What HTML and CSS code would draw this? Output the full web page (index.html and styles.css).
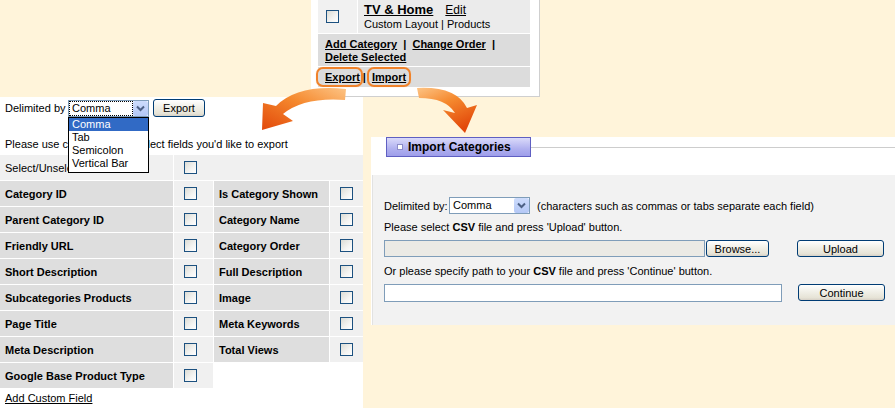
FILE: index.html
```html
<!DOCTYPE html>
<html lang="en">
<head>
  <meta charset="UTF-8" />
  <title>Categories - Export / Import</title>
  <link rel="stylesheet" href="styles.css">
</head>
<body>
  <!-- category list (top) -->
  <div class="cat-panel">
    <div class="cat-row">
      <div class="cat-check"><span class="cb"></span></div>
      <div class="cat-info">
        <div><a class="cat-name">TV &amp; Home</a><a class="cat-edit">Edit</a></div>
        <div class="cat-sub">Custom Layout | Products</div>
      </div>
    </div>
    <div class="cat-actions">
      <a>Add Category</a>&nbsp;&nbsp;|&nbsp;&nbsp;<a>Change Order</a>&nbsp;&nbsp;|<br><a>Delete Selected</a>
    </div>
    <div class="cat-io">
      <a class="hl hl-export">Export</a><span class="sep">|</span><a class="hl">Import</a>
    </div>
  </div>

  <!-- export form (left) -->
  <div class="export-panel">
    <div class="export-bar">
      <span class="bar-label">Delimited by</span>
      <div class="xp-select focus">
        <span class="val">Comma</span>
        <span class="xp-arrow"><svg width="15" height="15" viewBox="0 0 15 15"><polyline points="4,5.5 7.5,9 11,5.5" fill="none" stroke="#4d6185" stroke-width="2"/></svg></span>
      </div>
      <button class="xp-btn export-btn">Export</button>
    </div>
    <ul class="dropdown">
      <li class="sel">Comma</li>
      <li>Tab</li>
      <li>Semicolon</li>
      <li>Vertical Bar</li>
    </ul>
    <p class="hint">Please use checkboxes to select fields you'd like to export</p>
    <div class="fields">
      <div class="lbl light">Select/Unselect All</div>
      <div class="chk wide"><span class="cb"></span></div>

      <div class="lbl">Category ID</div><div class="chk"><span class="cb"></span></div>
      <div class="lbl">Is Category Shown</div><div class="chk"><span class="cb"></span></div>

      <div class="lbl">Parent Category ID</div><div class="chk"><span class="cb"></span></div>
      <div class="lbl">Category Name</div><div class="chk"><span class="cb"></span></div>

      <div class="lbl">Friendly URL</div><div class="chk"><span class="cb"></span></div>
      <div class="lbl">Category Order</div><div class="chk"><span class="cb"></span></div>

      <div class="lbl">Short Description</div><div class="chk"><span class="cb"></span></div>
      <div class="lbl">Full Description</div><div class="chk"><span class="cb"></span></div>

      <div class="lbl">Subcategories Products</div><div class="chk"><span class="cb"></span></div>
      <div class="lbl">Image</div><div class="chk"><span class="cb"></span></div>

      <div class="lbl">Page Title</div><div class="chk"><span class="cb"></span></div>
      <div class="lbl">Meta Keywords</div><div class="chk"><span class="cb"></span></div>

      <div class="lbl">Meta Description</div><div class="chk"><span class="cb"></span></div>
      <div class="lbl">Total Views</div><div class="chk"><span class="cb"></span></div>

      <div class="lbl">Google Base Product Type</div><div class="chk"><span class="cb"></span></div>
    </div>
    <a class="add-field">Add Custom Field</a>
  </div>

  <!-- import form (right) -->
  <div class="import-panel">
    <div class="import-head">
      <div class="import-tab"><span class="tab-icon"></span>Import Categories</div>
      <div class="head-line"></div>
    </div>
    <div class="import-body">
      <div class="imp-row">
        <span class="imp-label">Delimited by:</span>
        <div class="xp-select">
          <span class="val">Comma</span>
          <span class="xp-arrow"><svg width="15" height="15" viewBox="0 0 15 15"><polyline points="4,5.5 7.5,9 11,5.5" fill="none" stroke="#4d6185" stroke-width="2"/></svg></span>
        </div>
        <span class="imp-note">(characters such as commas or tabs separate each field)</span>
      </div>
      <p class="imp-text">Please select <b>CSV</b> file and press 'Upload' button.</p>
      <div class="imp-row">
        <span class="file-box"></span>
        <button class="xp-btn browse-btn">Browse...</button>
        <button class="xp-btn wide-btn">Upload</button>
      </div>
      <p class="imp-text">Or please specify path to your <b>CSV</b> file and press 'Continue' button.</p>
      <div class="imp-row">
        <input class="path-input" type="text">
        <button class="xp-btn wide-btn">Continue</button>
      </div>
    </div>
  </div>

  <!-- callout arrows -->
  <svg class="arrows" width="895" height="408" viewBox="0 0 895 408">
    <defs>
      <linearGradient id="gl" x1="1" y1="0" x2="0" y2="1">
        <stop offset="0" stop-color="#fdc485"/>
        <stop offset="0.45" stop-color="#f5892e"/>
        <stop offset="1" stop-color="#e2480a"/>
      </linearGradient>
      <linearGradient id="gr" x1="0" y1="0" x2="0.6" y2="1">
        <stop offset="0" stop-color="#fdc485"/>
        <stop offset="0.45" stop-color="#f5892e"/>
        <stop offset="1" stop-color="#e2480a"/>
      </linearGradient>
    </defs>
    <path d="M346 89 Q298 84 276 106 L263 103 L262 130 L293 121 L283 114 Q304 97 345 100 Z" fill="url(#gl)"/>
    <path d="M417 88 Q456 86 467 108 L477 105 L465 133 L443 110 L455 113 Q446 98 419 98 Z" fill="url(#gr)"/>
  </svg>
</body>
</html>
```

FILE: styles.css
```css
body {
  margin: 0;
  width: 895px;
  height: 408px;
  position: relative;
  overflow: hidden;
  background-color: #fff4da;
  font-family: 'Liberation Sans', Tahoma, sans-serif;
  font-size: 11px;
  color: #000;
}

a {
  color: #000;
  text-decoration: underline;
  cursor: pointer;
}

p {
  margin: 0;
}

/* checkbox, XP style */
.cb {
  display: inline-block;
  width: 13px;
  height: 13px;
  box-sizing: border-box;
  border: 1px solid #1c5180;
  background: linear-gradient(135deg, #dcdcd5 0%, #f4f4f2 60%, #fff 100%);
}

/* XP button */
.xp-btn {
  height: 18px;
  box-sizing: border-box;
  padding: 0;
  border: 1px solid #003c74;
  border-radius: 3px;
  background: linear-gradient(#fff 0%, #f2f1ea 40%, #e6e3d6 85%, #d6d0c5 100%);
  font-family: inherit;
  font-size: 11px;
  color: #000;
}

/* XP select */
.xp-select {
  display: flex;
  width: 81px;
  height: 17px;
  box-sizing: border-box;
  border: 1px solid #7f9db9;
  background: #fff;
}

.xp-select .val {
  flex: 1;
  padding-left: 3px;
  line-height: 15px;
}

.xp-select.focus .val {
  outline: 1px dotted #000;
  outline-offset: -1px;
}

.xp-arrow {
  width: 15px;
  height: 15px;
  border-radius: 2px;
  background: linear-gradient(#cddcfc, #b4c8f6);
}

.xp-arrow svg {
  display: block;
}

/* ---- category list ---- */
.cat-panel {
  position: absolute;
  left: 311px;
  top: 0;
  width: 212px;
  padding: 0 9px 9px 7px;
  background: #fff;
  border-right: 1px solid #cfcfcf;
  border-bottom: 1px solid #cfcfcf;
}

.cat-row {
  display: flex;
  gap: 1px;
  height: 33px;
}

.cat-check {
  width: 31px;
  padding-left: 8px;
  display: flex;
  align-items: center;
  background: #f1f1f1;
}

.cat-info {
  flex: 1;
  padding: 2px 0 0 6px;
  background: #ebebeb;
}

.cat-name {
  font-size: 13px;
  font-weight: bold;
  line-height: 15px;
}

.cat-edit {
  margin-left: 12px;
  font-size: 12px;
}

.cat-sub {
  margin-top: 1px;
  line-height: 13px;
}

.cat-actions {
  margin-top: 1px;
  height: 28px;
  padding: 4px 7px 0;
  background: #dcdcdc;
  font-weight: bold;
  line-height: 13px;
}

.cat-io {
  display: flex;
  align-items: center;
  margin-top: 1px;
  height: 20px;
  background: #dcdcdc;
  font-weight: bold;
}

.hl {
  display: inline-block;
  height: 16px;
  line-height: 16px;
  padding: 0 3px;
  border: 2px solid #f0822a;
  border-radius: 7px;
  box-shadow: 0 0 1px #f9c18f;
}

.hl-export {
  margin-left: -2px;
  padding: 0 1px 0 7px;
}

.sep {
  margin: 0 1px 0 0;
}

/* ---- export form ---- */
.export-panel {
  position: absolute;
  left: 0;
  top: 97px;
  width: 363px;
  height: 311px;
  background: #fff;
}

.export-bar {
  display: flex;
  align-items: center;
  height: 18px;
  padding: 2px 0 0 5px;
}

.bar-label {
  width: 63px;
}

.export-btn {
  width: 52px;
  margin-left: 4px;
}

.dropdown {
  position: absolute;
  left: 68px;
  top: 20px;
  width: 81px;
  box-sizing: border-box;
  margin: 0;
  padding: 0 0 2px;
  list-style: none;
  border: 1px solid #000;
  background: #fff;
}

.dropdown li {
  padding-left: 3px;
  line-height: 13px;
}

.dropdown li.sel {
  background: #316ac5;
  color: #fff;
}

.hint {
  margin: 21px 0 4px 5px;
  line-height: 13px;
}

.fields {
  display: grid;
  grid-template-columns: 173px 39px 115px 33px;
  grid-auto-rows: 25px;
  gap: 1px;
}

.lbl {
  display: flex;
  align-items: center;
  padding-left: 5px;
  background: #dedede;
  font-weight: bold;
  white-space: nowrap;
}

.lbl.light {
  background: #f0f0f0;
  font-weight: normal;
}

.chk {
  display: flex;
  align-items: center;
  padding-left: 10px;
  background: #f0f0f0;
}

.chk.wide {
  grid-column: 2 / -1;
}

.add-field {
  display: block;
  margin: 4px 0 0 5px;
  line-height: 13px;
}

/* ---- import form ---- */
.import-panel {
  position: absolute;
  left: 371px;
  top: 137px;
  width: 523px;
  padding-left: 1px;
  background: #fff;
}

.import-head {
  display: flex;
  height: 38px;
  padding-left: 14px;
}

.import-tab {
  display: flex;
  align-items: center;
  gap: 5px;
  width: 145px;
  height: 20px;
  box-sizing: border-box;
  padding-left: 10px;
  border: 1px solid #5f5fc2;
  background: linear-gradient(#dadafa, #b0b0ef 60%, #9e9eea);
  font-size: 12px;
  font-weight: bold;
}

.tab-icon {
  width: 6px;
  height: 6px;
  box-sizing: border-box;
  border: 1px solid #8c8cc8;
  background: #fff;
}

.head-line {
  flex: 1;
  margin-top: 10px;
  border-top: 1px solid #cdcdcd;
}

.import-body {
  height: 150px;
  box-sizing: border-box;
  padding: 22px 0 0 11px;
  border-left: 1px solid #e2e2e2;
  background: #f2f2f2;
}

.imp-row {
  display: flex;
  align-items: center;
  height: 17px;
}

.imp-label {
  width: 65px;
}

.imp-note {
  margin-left: 7px;
}

.imp-text {
  margin: 7px 0 6px;
  line-height: 13px;
}

.imp-text + .imp-row {
  margin-bottom: 8px;
}

.file-box {
  width: 321px;
  height: 17px;
  box-sizing: border-box;
  border: 1px solid #7f9db9;
  background: #ebeae5;
}

.browse-btn {
  width: 63px;
  height: 17px;
  margin-left: 1px;
}

.wide-btn {
  width: 87px;
  height: 17px;
  margin-left: 28px;
}

.path-input {
  width: 398px;
  height: 18px;
  box-sizing: border-box;
  margin: 0;
  border: 1px solid #7f9db9;
  background: #fff;
}

.path-input + .wide-btn {
  margin-left: 16px;
}

.arrows {
  position: absolute;
  left: 0;
  top: 0;
  pointer-events: none;
}
```
